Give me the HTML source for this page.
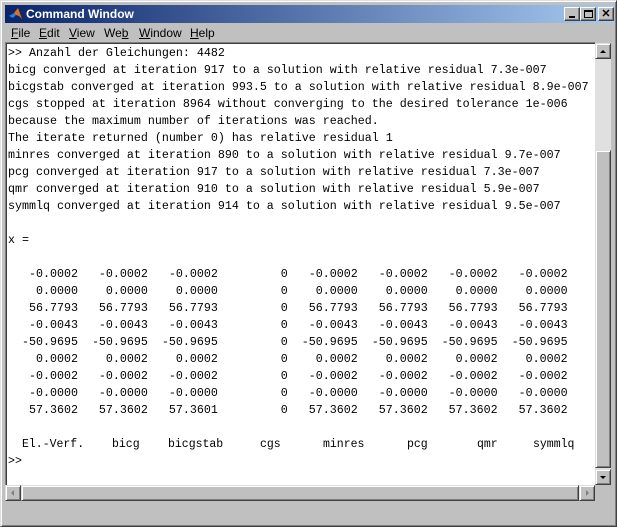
<!DOCTYPE html>
<html><head><style>
*{margin:0;padding:0;box-sizing:border-box}
body{width:617px;height:527px;background:#c0c0c0;position:relative;overflow:hidden;font-family:"Liberation Sans",sans-serif}
.win{position:absolute;left:0;top:0;width:617px;height:527px;border:1px solid;border-color:#dfdfdf #404040 #404040 #dfdfdf;box-shadow:inset 1px 1px 0 #fff,inset -1px -1px 0 #808080}
.title{position:absolute;left:4px;top:4px;width:609px;height:18px;background:linear-gradient(90deg,#0a246a,#a6caf0);color:#fff;font-weight:bold;font-size:12px;line-height:18px;padding-left:21px}
.logo{position:absolute;left:4px;top:2px;width:14px;height:14px}
.btn{position:absolute;top:2px;width:16px;height:14px;background:#c0c0c0;border:1px solid;border-color:#fff #404040 #404040 #fff;box-shadow:inset -1px -1px 0 #808080;color:#000;font-size:10px;line-height:12px;text-align:center}
.menu{position:absolute;left:4px;top:22px;width:609px;height:20px;font-size:12px;line-height:20px}
.menu span{position:absolute;top:0}
.menu u{text-decoration:underline}
.area{position:absolute;left:5px;top:42px;width:590px;height:443px;background:#fff;border-top:1px solid #808080;border-left:1px solid #808080}
.area:before{content:"";position:absolute;left:0;top:0;right:0;bottom:0;border-top:1px solid #404040;border-left:1px solid #404040}
pre{position:absolute;left:2px;top:2px;font-family:"Liberation Mono",monospace;font-size:11.67px;line-height:17px;color:#000}
.hdr{position:absolute;top:393px;font-family:"Liberation Mono",monospace;font-size:11.5px;line-height:17px}
.vs{position:absolute;left:595px;top:43px;width:16px;height:442px;background:#e0e0e0}
.hs{position:absolute;left:5px;top:485px;width:590px;height:16px;background:#e0e0e0}
.b3{position:absolute;background:#c0c0c0;border:1px solid;border-color:#dfdfdf #404040 #404040 #dfdfdf;box-shadow:inset 1px 1px 0 #fff,inset -1px -1px 0 #808080}
.corner{position:absolute;left:595px;top:485px;width:16px;height:16px;background:#c0c0c0}
</style></head><body>
<div class="win">
<div class="title">
<svg class="logo" viewBox="0 0 14 14"><path d="M0 9 L5 6 L7 8 L4 11Z" fill="#2a7fd0"/><path d="M5 6 L9 1 L13 12 L10 9 L7 8Z" fill="#e07020"/><path d="M9 1 L13 12 L11 6Z" fill="#a03010"/></svg>
Command Window
<div class="btn" style="left:559px"><div style="position:absolute;left:4px;top:8px;width:6px;height:2px;background:#000"></div></div>
<div class="btn" style="left:575px"><div style="position:absolute;left:3px;top:2px;width:9px;height:8px;border:1px solid #000;border-top-width:2px"></div></div>
<div class="btn" style="left:593px;font-weight:bold;font-size:11px">✕</div>
</div>
<div class="menu">
<span style="left:6px"><u>F</u>ile</span>
<span style="left:34px"><u>E</u>dit</span>
<span style="left:64px"><u>V</u>iew</span>
<span style="left:99px">We<u>b</u></span>
<span style="left:134px"><u>W</u>indow</span>
<span style="left:185px"><u>H</u>elp</span>
</div>
</div>
<div class="area">
<pre>&gt;&gt; Anzahl der Gleichungen: 4482
bicg converged at iteration 917 to a solution with relative residual 7.3e-007
bicgstab converged at iteration 993.5 to a solution with relative residual 8.9e-007
cgs stopped at iteration 8964 without converging to the desired tolerance 1e-006
because the maximum number of iterations was reached.
The iterate returned (number 0) has relative residual 1
minres converged at iteration 890 to a solution with relative residual 9.7e-007
pcg converged at iteration 917 to a solution with relative residual 7.3e-007
qmr converged at iteration 910 to a solution with relative residual 5.9e-007
symmlq converged at iteration 914 to a solution with relative residual 9.5e-007

x =

   -0.0002   -0.0002   -0.0002         0   -0.0002   -0.0002   -0.0002   -0.0002
    0.0000    0.0000    0.0000         0    0.0000    0.0000    0.0000    0.0000
   56.7793   56.7793   56.7793         0   56.7793   56.7793   56.7793   56.7793
   -0.0043   -0.0043   -0.0043         0   -0.0043   -0.0043   -0.0043   -0.0043
  -50.9695  -50.9695  -50.9695         0  -50.9695  -50.9695  -50.9695  -50.9695
    0.0002    0.0002    0.0002         0    0.0002    0.0002    0.0002    0.0002
   -0.0002   -0.0002   -0.0002         0   -0.0002   -0.0002   -0.0002   -0.0002
   -0.0000   -0.0000   -0.0000         0   -0.0000   -0.0000   -0.0000   -0.0000
   57.3602   57.3602   57.3601         0   57.3602   57.3602   57.3602   57.3602


&gt;&gt;</pre>
<span class="hdr" style="left:16px">El.-Verf.</span>
<span class="hdr" style="left:106px">bicg</span>
<span class="hdr" style="left:162px">bicgstab</span>
<span class="hdr" style="left:254px">cgs</span>
<span class="hdr" style="left:317px">minres</span>
<span class="hdr" style="left:401px">pcg</span>
<span class="hdr" style="left:471px">qmr</span>
<span class="hdr" style="left:527px">symmlq</span>
</div>
<div class="vs">
<div class="b3" style="left:0;top:0;width:16px;height:16px"><svg width="14" height="14" style="position:absolute;left:0;top:0"><path d="M4 9 L7 6 L10 9Z" fill="#000"/></svg></div>
<div class="b3" style="left:0;top:107px;width:16px;height:318px"></div>
<div class="b3" style="left:0;top:426px;width:16px;height:16px"><svg width="14" height="14" style="position:absolute;left:0;top:0"><path d="M4 6 L7 9 L10 6Z" fill="#000"/></svg></div>
</div>
<div class="hs">
<div class="b3" style="left:0;top:0;width:16px;height:16px"><svg width="14" height="14" style="position:absolute;left:0;top:0"><path d="M8 4 L5 7 L8 10Z" fill="#808080"/></svg></div>
<div class="b3" style="left:16px;top:0;width:558px;height:16px"></div>
<div class="b3" style="left:574px;top:0;width:16px;height:16px"><svg width="14" height="14" style="position:absolute;left:0;top:0"><path d="M6 4 L9 7 L6 10Z" fill="#808080"/></svg></div>
</div>
<div class="corner"></div>
</body></html>
